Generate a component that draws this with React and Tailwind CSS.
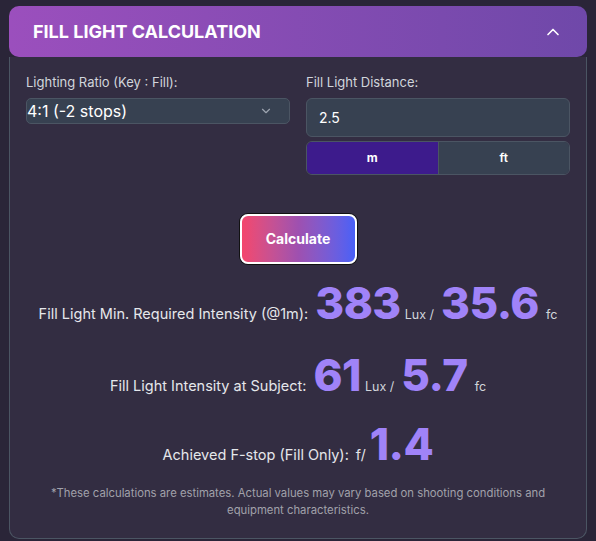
import React, { useState } from "react";
import { ChevronDown, ChevronUp } from "lucide-react";

export default function App() {
  const [unit, setUnit] = useState("m");

  return (
    <div
      className="min-h-screen bg-[#2a2538] px-[9px] pt-[6px]"
      style={{ fontFamily: "Inter, 'Noto Sans', sans-serif" }}
    >
      {/* Header */}
      <div className="flex items-center justify-between h-[51px] rounded-[10px] bg-gradient-to-r from-[#9b4fbd] to-[#6f48a9] pl-6 pr-6">
        <h2 className="text-[18px] font-bold text-white">FILL LIGHT CALCULATION</h2>
        <ChevronUp size={20} strokeWidth={2} className="text-white" />
      </div>

      {/* Body */}
      <div className="bg-[#332d42] border-x border-b border-[#4b5563] rounded-b-[10px] px-4 pt-[16px] pb-[19px]">
        <div className="grid grid-cols-2 gap-4">
          <div>
            <label className="block text-[13px] text-[#d1d5db] mb-[5px]">Lighting Ratio (Key : Fill):</label>
            <div className="flex items-center justify-between h-[26px] bg-[#374151] border border-[#4b5563] rounded-[5px] pr-4">
              <span className="text-[16px] text-white leading-none">4:1 (-2 stops)</span>
              <ChevronDown size={14} className="text-[#9ca3af]" />
            </div>
          </div>
          <div>
            <label className="block text-[13px] text-[#d1d5db] mb-[5px]">Fill Light Distance:</label>
            <div className="flex items-center h-[39px] bg-[#374151] border border-[#4b5563] rounded-[6px] px-3">
              <span className="text-[14px] text-white">2.5</span>
            </div>
            <div className="flex h-[34px] mt-[4px] border border-[#4b5563] rounded-[6px] overflow-hidden">
              <button
                onClick={() => setUnit("m")}
                className={`flex-1 text-[12px] font-bold text-white border-r border-[#4b5563] ${unit === "m" ? "bg-[#3d1b8c]" : "bg-[#374151]"}`}
              >
                m
              </button>
              <button
                onClick={() => setUnit("ft")}
                className={`flex-1 text-[12px] font-semibold text-white ${unit === "ft" ? "bg-[#3d1b8c]" : "bg-[#374151]"}`}
              >
                ft
              </button>
            </div>
          </div>
        </div>

        <div className="flex justify-center mt-[39px]">
          <button className="w-[117px] h-[50px] rounded-[8px] border-2 border-white bg-gradient-to-r from-[#f4466c] via-[#9e50b0] to-[#4860f7] text-[14px] font-bold text-white shadow-[0_0_0_1px_#111]">
            Calculate
          </button>
        </div>

        {/* Results */}
        <div className="mt-[17px] flex items-baseline justify-center gap-[7px] text-[#e5e7eb]">
          <span className="text-[14.5px]">Fill Light Min. Required Intensity (@1m):</span>
          <span className="text-[44px] font-extrabold leading-none text-[#a083f8] tracking-[-0.5px]">383</span>
          <span className="text-[12.5px] text-[#d1d5db] -ml-[3px]">Lux /</span>
          <span className="text-[44px] font-extrabold leading-none text-[#a083f8] tracking-[-0.5px]">35.6</span>
          <span className="text-[12.5px] text-[#d1d5db]">fc</span>
        </div>

        <div className="mt-[28px] flex items-baseline justify-center gap-[7px] text-[#e5e7eb]">
          <span className="text-[14.5px]">Fill Light Intensity at Subject:</span>
          <span className="text-[44px] font-extrabold leading-none text-[#a083f8] tracking-[-0.5px]">61</span>
          <span className="text-[12.5px] text-[#d1d5db] -ml-[3px]">Lux /</span>
          <span className="text-[44px] font-extrabold leading-none text-[#a083f8] tracking-[-0.5px]">5.7</span>
          <span className="text-[12.5px] text-[#d1d5db]">fc</span>
        </div>

        <div className="mt-[25px] flex items-baseline justify-center gap-[7px] text-[#e5e7eb]">
          <span className="text-[14.5px]">Achieved F-stop (Fill Only):</span>
          <span className="text-[14px]">f/</span>
          <span className="text-[44px] font-extrabold leading-none text-[#a083f8] -ml-[3px] tracking-[-0.5px]">1.4</span>
        </div>

        <p className="mt-[19px] text-center text-[11.3px] leading-[17px] text-[#a1a1aa] px-6">
          *These calculations are estimates. Actual values may vary based on shooting conditions and equipment characteristics.
        </p>
      </div>
    </div>
  );
}
